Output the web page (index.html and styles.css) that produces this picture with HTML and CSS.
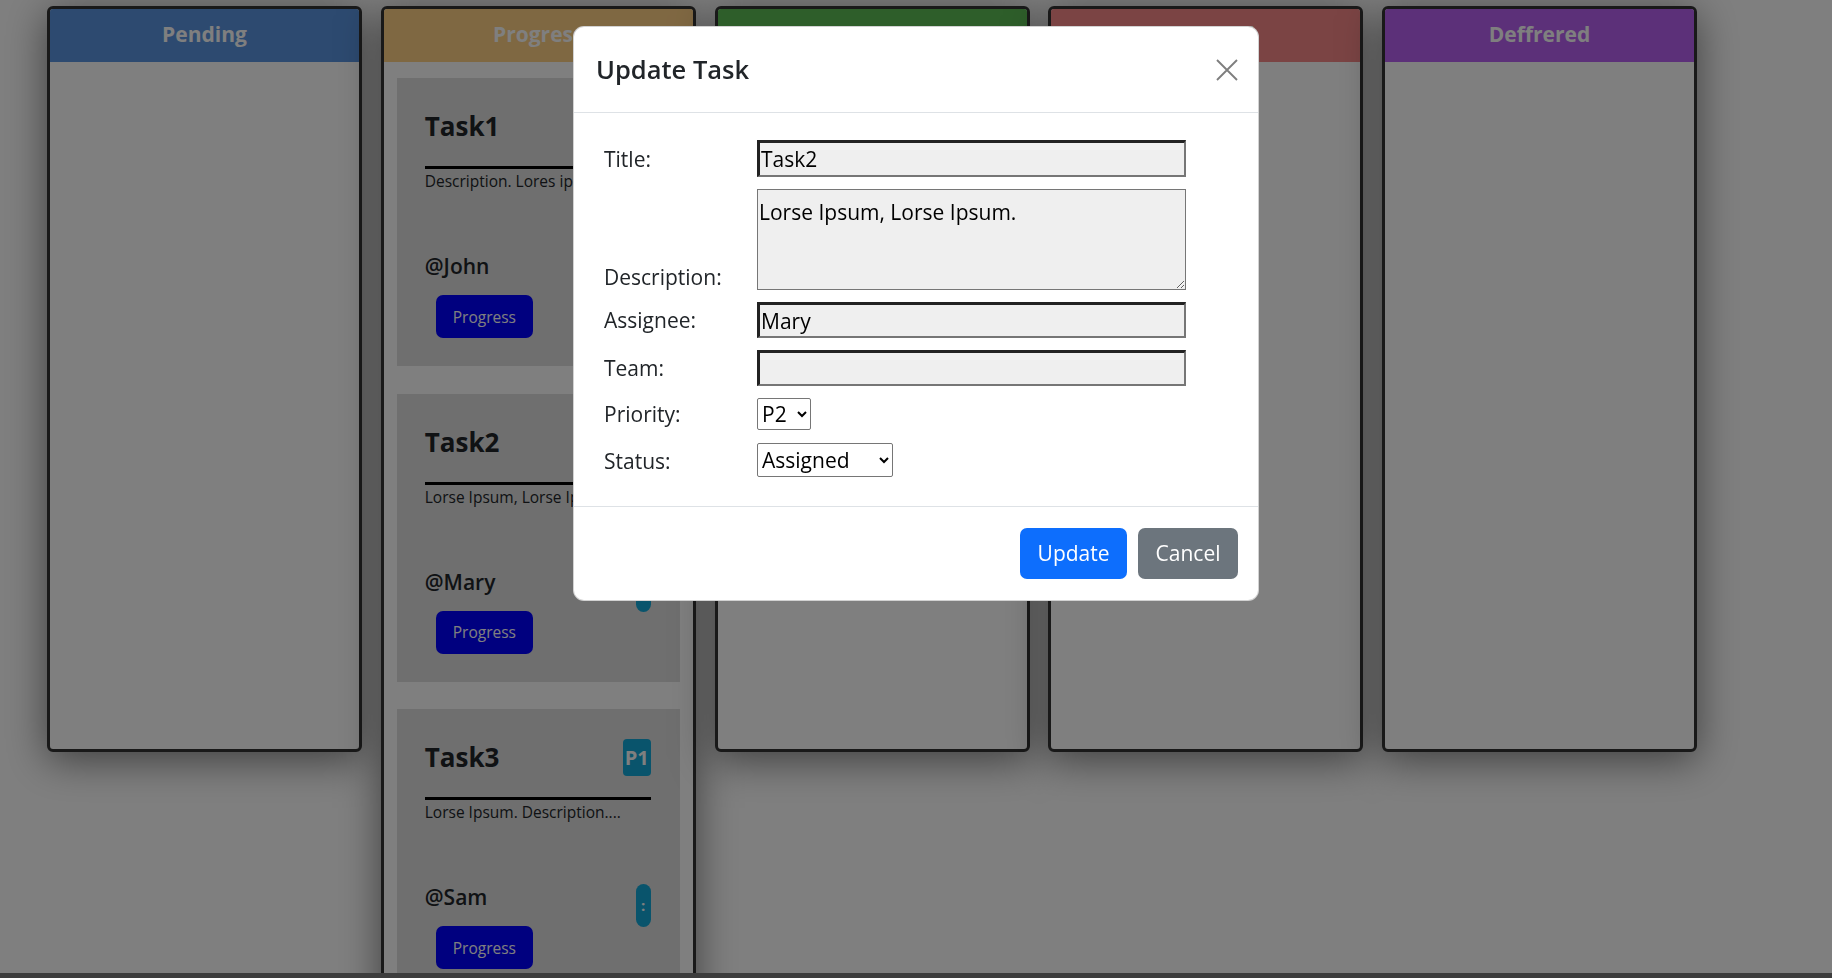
FILE: index.html
```html
<!DOCTYPE html>
<html lang="en">
<head>
<meta charset="utf-8">
<title>Task Board</title>
<link rel="stylesheet" href="styles.css">
</head>
<body>
<main class="board">
  <section class="column">
    <header class="column-head head-pending">Pending</header>
    <div class="column-body"></div>
  </section>
  <section class="column">
    <header class="column-head head-progress">Progress</header>
    <div class="column-body">
      <article class="card">
        <div class="card-head"><h2 class="card-title">Task1</h2><span class="badge">P0</span></div>
        <hr class="card-rule">
        <p class="card-desc">Description. Lores ipsum.</p>
        <div class="card-foot">
          <div class="card-owner">
            <div class="assignee">@John</div>
            <button class="status-btn">Progress</button>
          </div>
          <button class="kebab">:</button>
        </div>
      </article>
      <article class="card">
        <div class="card-head"><h2 class="card-title">Task2</h2><span class="badge">P2</span></div>
        <hr class="card-rule">
        <p class="card-desc">Lorse Ipsum, Lorse Ipsum.</p>
        <div class="card-foot">
          <div class="card-owner">
            <div class="assignee">@Mary</div>
            <button class="status-btn">Progress</button>
          </div>
          <button class="kebab">:</button>
        </div>
      </article>
      <article class="card">
        <div class="card-head"><h2 class="card-title">Task3</h2><span class="badge">P1</span></div>
        <hr class="card-rule">
        <p class="card-desc">Lorse Ipsum. Description....</p>
        <div class="card-foot">
          <div class="card-owner">
            <div class="assignee">@Sam</div>
            <button class="status-btn">Progress</button>
          </div>
          <button class="kebab">:</button>
        </div>
      </article>
    </div>
  </section>
  <section class="column">
    <header class="column-head head-completed">Completed</header>
    <div class="column-body"></div>
  </section>
  <section class="column">
    <header class="column-head head-deployed">Deployed</header>
    <div class="column-body"></div>
  </section>
  <section class="column">
    <header class="column-head head-deferred">Deffrered</header>
    <div class="column-body"></div>
  </section>
</main>
<div class="page-edge"></div>
<div class="backdrop"></div>
<div class="modal">
  <div class="modal-dialog">
    <div class="modal-header">
      <h5 class="modal-title">Update Task</h5>
      <button class="btn-close" aria-label="Close">
        <svg width="22" height="22" viewBox="0 0 22 22"><path d="M1 1L21 21M21 1L1 21" stroke="#000" stroke-width="1.9" fill="none"/></svg>
      </button>
    </div>
    <form class="modal-body">
      <div class="task-form">
        <div class="field"><label class="field-label">Title:</label><input class="text-input" type="text" value="Task2"></div>
        <div class="field field-desc"><label class="field-label">Description:</label><textarea class="text-area">Lorse Ipsum, Lorse Ipsum.</textarea></div>
        <div class="field"><label class="field-label">Assignee:</label><input class="text-input text-input-sm" type="text" value="Mary"></div>
        <div class="field"><label class="field-label">Team:</label><input class="text-input text-input-sm" type="text" value=""></div>
        <div class="field"><label class="field-label">Priority:</label>
          <select class="select select-priority"><option>P0</option><option>P1</option><option selected>P2</option></select>
        </div>
        <div class="field field-status"><label class="field-label">Status:</label>
          <select class="select select-status"><option selected>Assigned</option><option>In Progress</option><option>Completed</option><option>Deployed</option><option>Deffered</option></select>
        </div>
      </div>
    </form>
    <div class="modal-footer">
      <button class="btn btn-primary">Update</button>
      <button class="btn btn-secondary">Cancel</button>
    </div>
  </div>
</div>
</body>
</html>
```

FILE: styles.css
```css
* { box-sizing: border-box; }
html, body { margin: 0; height: 100%; }
body {
  font-family: "Open Sans", "Noto Sans", sans-serif;
  color: #212529;
  background: #fff;
  overflow: hidden;
}

/* board */
.board {
  display: flex;
  align-items: flex-start;
  gap: 18.75px;
  padding: 6px 0 0 47px;
}
.column {
  width: 315px;
  min-height: 746px;
  flex-shrink: 0;
  display: flex;
  flex-direction: column;
  border: 3px solid #333;
  border-radius: 6px;
  background: #fff;
  box-shadow: 0 8px 40px rgba(0, 0, 0, 0.5);
}
.column-head {
  height: 53px;
  line-height: 51px;
  padding-bottom: 2px;
  text-align: center;
  font-size: 21px;
  font-weight: 700;
  color: #fff;
  border-radius: 3px 3px 0 0;
}
.head-pending { background: #5a94e0; }
.head-progress { background: #ffd085; }
.head-completed { background: #5cbc54; }
.head-deployed { background: #f68888; }
.head-deferred { background: #b860f2; }
.column-body {
  flex: 1;
  display: flex;
  flex-direction: column;
  gap: 27.5px;
  padding: 16px 13px 16px 13px;
}

/* cards */
.card {
  background: #dedede;
  padding: 30px 29px 28px 28px;
}
.card-head {
  display: flex;
  justify-content: space-between;
  align-items: center;
  height: 37px;
}
.card-title {
  margin: 0;
  font-size: 26px;
  font-weight: 700;
  line-height: 37px;
  color: #212529;
}
.badge {
  height: 37px;
  line-height: 37px;
  padding: 0 2px;
  border-radius: 4px;
  background: #12a8d8;
  color: #fff;
  font-size: 20px;
  font-weight: 700;
}
.card-rule {
  margin: 21px 0 1px;
  height: 3px;
  border: 0;
  background: #000;
  opacity: 1;
}
.card-desc {
  margin: 0 0 58.5px;
  font-size: 15.5px;
  line-height: 22.5px;
}
.card-foot {
  display: flex;
  justify-content: space-between;
  align-items: flex-start;
}
.assignee {
  font-size: 21px;
  font-weight: 600;
  line-height: 30px;
}
.status-btn {
  margin: 14px 0 0 11px;
  height: 43px;
  padding: 0 17px;
  border: 0;
  border-radius: 7px;
  background: #0000ff;
  color: #fff;
  font-family: inherit;
  font-size: 15.5px;
}
.kebab {
  margin-top: 2px;
  width: 15px;
  height: 43px;
  padding: 0;
  border: 0;
  border-radius: 8px;
  background: #12a8d8;
  color: #fff;
  font-family: inherit;
  font-size: 15px;
  font-weight: 700;
  line-height: 43px;
}

.page-edge {
  position: fixed;
  left: 0;
  right: 0;
  bottom: 0;
  height: 5px;
  background: #7a7a7a;
  z-index: 5;
}

/* modal */
.backdrop {
  position: fixed;
  inset: 0;
  background: rgba(0, 0, 0, 0.5);
  z-index: 10;
}
.modal {
  position: fixed;
  inset: 0;
  z-index: 20;
}
.modal-dialog {
  width: 686px;
  margin: 26px auto 0;
  background: #fff;
  border: 1px solid rgba(0, 0, 0, 0.175);
  border-radius: 11px;
}
.modal-header {
  display: flex;
  align-items: center;
  justify-content: space-between;
  padding: 22px;
  border-bottom: 1px solid #dee2e6;
}
.modal-title {
  margin: 0;
  font-size: 25.5px;
  font-weight: 600;
  line-height: 41px;
  color: #212529;
}
.btn-close {
  width: 22px;
  height: 22px;
  margin-right: -2px;
  padding: 0;
  border: 0;
  background: none;
  opacity: 0.5;
  display: flex;
}
.modal-body {
  display: block;
  padding: 22px 22px 22px 30px;
  margin: 0;
}
.task-form {
  display: flex;
  flex-direction: column;
  gap: 12px;
  margin: 5px 0 7px;
}
.field {
  display: flex;
  align-items: center;
}
.field-desc { align-items: flex-end; }
.field-desc .field-label { padding-bottom: 0; margin-bottom: -2px; }
.field-status .field-label { padding-top: 2px; }
.field-label {
  width: 153px;
  flex-shrink: 0;
  font-size: 21px;
  line-height: 30px;
  color: #212529;
}
.text-input {
  width: 429px;
  height: 37px;
  padding: 0 1px;
  background: #efefef;
  border-style: solid;
  border-width: 3px 2px 2px 3px;
  border-color: #222 #767676 #767676 #222;
  font-family: inherit;
  font-size: 21px;
  color: #000;
}
.text-input-sm { height: 36px; }
.text-area {
  width: 429px;
  height: 101px;
  padding: 7px 2px 2px 1px;
  background: #efefef;
  border: 1px solid #767676;
  font-family: inherit;
  font-size: 21px;
  line-height: 31.5px;
  color: #000;
}
.select {
  font-family: inherit;
  font-size: 21px;
  color: #000;
  background: #fff;
  border: 1px solid #767676;
  border-radius: 2px;
}
.select-priority { width: 54px; height: 32px; }
.select-status { width: 136px; height: 34px; margin-top: 1px; }

.modal-footer {
  display: flex;
  justify-content: flex-end;
  gap: 11px;
  padding: 21px 20px;
  border-top: 1px solid #dee2e6;
}
.btn {
  height: 51px;
  padding: 0 17.5px;
  border: 0;
  border-radius: 7px;
  color: #fff;
  font-family: inherit;
  font-size: 21px;
  line-height: 51px;
}
.btn-primary { background: #0d6efd; }
.btn-secondary { background: #6c757d; }
```
